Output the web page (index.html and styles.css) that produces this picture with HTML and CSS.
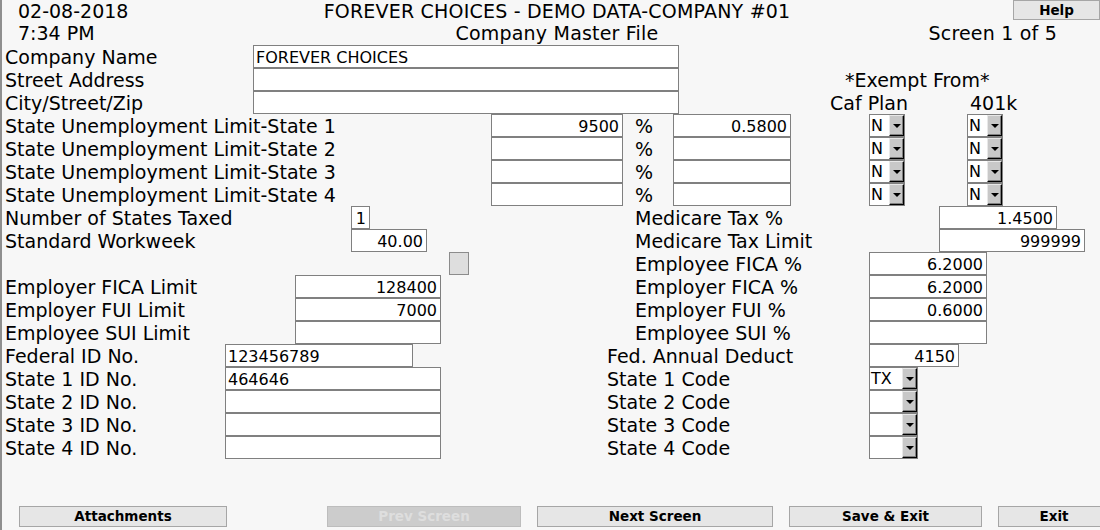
FILE: index.html
```html
<!DOCTYPE html>
<html>
<head>
<meta charset="utf-8">
<title>Company Master File</title>
<link rel="stylesheet" href="styles.css">
</head>
<body>
<div class="screen">
  <div class="form">
    <div class="hdr date r1">02-08-2018</div>
    <div class="hdr title r1">FOREVER CHOICES - DEMO DATA-COMPANY #01</div>
    <button class="btn help r1">Help</button>
    <div class="hdr date r2">7:34 PM</div>
    <div class="hdr title r2">Company Master File</div>
    <div class="hdr screen-no r2">Screen 1 of 5</div>

    <div class="lbl r3">Company Name</div>
    <input class="f co r3" value="FOREVER CHOICES">
    <div class="lbl r4">Street Address</div>
    <input class="f co r4" value="">
    <div class="lbl r5">City/Street/Zip</div>
    <input class="f co r5" value="">

    <div class="txt exempt r4">*Exempt From*</div>
    <div class="txt caf r5">Caf Plan</div>
    <div class="txt k401 r5">401k</div>

    <div class="lbl r6">State Unemployment Limit-State 1</div>
    <input class="f num sul r6" value="9500">
    <div class="txt pct r6">%</div>
    <input class="f num sul2 r6" value="0.5800">
    <div class="dd dd-caf r6"><span class="dd-val">N</span><span class="dd-btn"></span></div>
    <div class="dd dd-401 r6"><span class="dd-val">N</span><span class="dd-btn"></span></div>

    <div class="lbl r7">State Unemployment Limit-State 2</div>
    <input class="f num sul r7" value="">
    <div class="txt pct r7">%</div>
    <input class="f num sul2 r7" value="">
    <div class="dd dd-caf r7"><span class="dd-val">N</span><span class="dd-btn"></span></div>
    <div class="dd dd-401 r7"><span class="dd-val">N</span><span class="dd-btn"></span></div>

    <div class="lbl r8">State Unemployment Limit-State 3</div>
    <input class="f num sul r8" value="">
    <div class="txt pct r8">%</div>
    <input class="f num sul2 r8" value="">
    <div class="dd dd-caf r8"><span class="dd-val">N</span><span class="dd-btn"></span></div>
    <div class="dd dd-401 r8"><span class="dd-val">N</span><span class="dd-btn"></span></div>

    <div class="lbl r9">State Unemployment Limit-State 4</div>
    <input class="f num sul r9" value="">
    <div class="txt pct r9">%</div>
    <input class="f num sul2 r9" value="">
    <div class="dd dd-caf r9"><span class="dd-val">N</span><span class="dd-btn"></span></div>
    <div class="dd dd-401 r9"><span class="dd-val">N</span><span class="dd-btn"></span></div>

    <div class="lbl r10">Number of States Taxed</div>
    <input class="f num nstates r10" value="1">
    <div class="txt rlbl-pct r10">Medicare Tax %</div>
    <input class="f num medpct r10" value="1.4500">

    <div class="lbl r11">Standard Workweek</div>
    <input class="f num workweek r11" value="40.00">
    <div class="txt rlbl-pct r11">Medicare Tax Limit</div>
    <input class="f num medlim r11" value="999999">

    <button class="sqbtn r12" aria-label="Options"></button>
    <div class="txt rlbl-pct r12">Employee FICA %</div>
    <input class="f num rate r12" value="6.2000">

    <div class="lbl r13">Employer FICA Limit</div>
    <input class="f num limit r13" value="128400">
    <div class="txt rlbl-pct r13">Employer FICA %</div>
    <input class="f num rate r13" value="6.2000">

    <div class="lbl r14">Employer FUI Limit</div>
    <input class="f num limit r14" value="7000">
    <div class="txt rlbl-pct r14">Employer FUI %</div>
    <input class="f num rate r14" value="0.6000">

    <div class="lbl r15">Employee SUI Limit</div>
    <input class="f num limit r15" value="">
    <div class="txt rlbl-pct r15">Employee SUI %</div>
    <input class="f num rate r15" value="">

    <div class="lbl r16">Federal ID No.</div>
    <input class="f fedid r16" value="123456789">
    <div class="txt rlbl r16">Fed. Annual Deduct</div>
    <input class="f num fedded r16" value="4150">

    <div class="lbl r17">State 1 ID No.</div>
    <input class="f stid r17" value="464646">
    <div class="txt rlbl r17">State 1 Code</div>
    <div class="dd dd-st r17"><span class="dd-val">TX</span><span class="dd-btn"></span></div>

    <div class="lbl r18">State 2 ID No.</div>
    <input class="f stid r18" value="">
    <div class="txt rlbl r18">State 2 Code</div>
    <div class="dd dd-st r18"><span class="dd-val"></span><span class="dd-btn"></span></div>

    <div class="lbl r19">State 3 ID No.</div>
    <input class="f stid r19" value="">
    <div class="txt rlbl r19">State 3 Code</div>
    <div class="dd dd-st r19"><span class="dd-val"></span><span class="dd-btn"></span></div>

    <div class="lbl r20">State 4 ID No.</div>
    <input class="f stid r20" value="">
    <div class="txt rlbl r20">State 4 Code</div>
    <div class="dd dd-st r20"><span class="dd-val"></span><span class="dd-btn"></span></div>
  </div>

  <div class="footer">
    <button class="btn fbtn b-attach">Attachments</button>
    <button class="btn fbtn b-prev" disabled>Prev Screen</button>
    <button class="btn fbtn b-next">Next Screen</button>
    <button class="btn fbtn b-save">Save &amp; Exit</button>
    <button class="btn fbtn b-exit">Exit</button>
  </div>
</div>
</body>
</html>
```

FILE: styles.css
```css
html, body {
  margin: 0;
  padding: 0;
  width: 1100px;
  height: 530px;
  overflow: hidden;
  background: #f7f7f7;
}

body {
  font-family: "DejaVu Sans", Verdana, sans-serif;
  color: #000;
}

.screen {
  height: 530px;
  border-left: 2px solid #8f8f8f;
  box-sizing: border-box;
}

.form {
  display: grid;
  grid-template-columns:
    [x0] 3px [lbl] 220px [id] 28px [co] 42px [lim] 56px [ns] 19px [nse] 43px
    [fide] 14px [wwe] 14px [ide] 8px [sb] 20px [sbe] 22px [sul] 116px [rl] 16px
    [sule] 12px [pct] 38px [sul2] 6px [coe] 112px [sul2e] 78px [dd1] 70px [med] 20px
    [fade] 8px [dd2] 20px [efe] 70px [mede] 28px [mle] 15px [end];
  grid-template-rows: 22px repeat(19, 23px);
  font-size: 19px;
}

.r1 { grid-row: 1; }
.r2 { grid-row: 2; }
.r3 { grid-row: 3; }
.r4 { grid-row: 4; }
.r5 { grid-row: 5; }
.r6 { grid-row: 6; }
.r7 { grid-row: 7; }
.r8 { grid-row: 8; }
.r9 { grid-row: 9; }
.r10 { grid-row: 10; }
.r11 { grid-row: 11; }
.r12 { grid-row: 12; }
.r13 { grid-row: 13; }
.r14 { grid-row: 14; }
.r15 { grid-row: 15; }
.r16 { grid-row: 16; }
.r17 { grid-row: 17; }
.r18 { grid-row: 18; }
.r19 { grid-row: 19; }
.r20 { grid-row: 20; }

.hdr, .lbl, .txt {
  white-space: nowrap;
  line-height: 23px;
  align-self: start;
}

.lbl, .txt {
  padding-top: 1px;
}

.hdr.date {
  grid-column: lbl / co;
  padding-left: 13px;
}

.hdr.title {
  grid-column: x0 / end;
  text-align: center;
  padding-left: 12px;
  letter-spacing: 0.2px;
}

.hdr.screen-no {
  grid-column: sul2e / end;
  justify-self: end;
  margin-right: 43px;
  letter-spacing: 0.2px;
}

.lbl {
  grid-column: lbl / id;
}

.txt.pct { grid-column: pct / sul2; }
.txt.rlbl-pct { grid-column: pct / sul2e; }
.txt.rlbl { grid-column: rl / sul2e; }
.txt.exempt { grid-column: sul2e / end; padding-left: 54px; }
.txt.caf { grid-column: sul2e / dd2; padding-left: 39px; }
.txt.k401 { grid-column: dd2 / end; padding-left: 3px; }

/* text fields */
.f {
  display: block;
  width: 100%;
  height: 23px;
  margin: 0;
  box-sizing: border-box;
  border: 1px solid #808080;
  background: #fff;
  padding: 1px 3px 0 2px;
  font-family: "DejaVu Sans", Verdana, sans-serif;
  font-size: 16px;
  color: #000;
  outline: none;
  border-radius: 0;
}

.f.num { text-align: right; padding-right: 3px; }

.co { grid-column: co / coe; }
.sul { grid-column: sul / sule; }
.sul2 { grid-column: sul2 / sul2e; }
.nstates { grid-column: ns / nse; }
.workweek { grid-column: ns / wwe; }
.limit { grid-column: lim / ide; }
.fedid { grid-column: id / fide; }
.stid { grid-column: id / ide; }
.medpct { grid-column: med / mede; }
.medlim { grid-column: med / mle; }
.rate { grid-column: dd1 / efe; }
.fedded { grid-column: dd1 / fade; }

/* dropdowns */
.dd {
  display: flex;
  height: 23px;
  box-sizing: border-box;
  border: 1px solid #808080;
  justify-self: start;
}

.dd-caf { grid-column: dd1 / end; width: 36px; }
.dd-401 { grid-column: dd2 / end; width: 36px; }
.dd-st { grid-column: dd1 / end; width: 49px; }

.dd-val {
  flex: 1;
  background: #fff;
  font-size: 16px;
  line-height: 22px;
  padding-left: 1px;
}

.dd-btn {
  width: 15px;
  box-sizing: border-box;
  background: #c8c8c8;
  border-top: 1px solid #e8e8e8;
  border-left: 1px solid #e8e8e8;
  border-right: 1px solid #000;
  border-bottom: 1px solid #000;
  box-shadow: inset -1px -1px 0 #808080;
  display: flex;
  align-items: center;
  justify-content: center;
}

.dd-btn::after {
  content: "";
  width: 0;
  height: 0;
  border-left: 4px solid transparent;
  border-right: 4px solid transparent;
  border-top: 4px solid #000;
}

/* small square button */
.sqbtn {
  grid-column: sb / sbe;
  width: 20px;
  height: 23px;
  margin: 0;
  padding: 0;
  box-sizing: border-box;
  background: #dedede;
  border: 1px solid #8c8c8c;
}

/* push buttons */
.btn {
  margin: 0;
  padding: 0;
  box-sizing: border-box;
  background: #e6e6e6;
  border: 1px solid #a6a6a6;
  font-family: "DejaVu Sans", Verdana, sans-serif;
  font-weight: bold;
  font-size: 13.5px;
  color: #000;
  border-radius: 0;
}

.help {
  grid-column: x0 / end;
  justify-self: end;
  align-self: start;
  width: 87px;
  height: 20px;
}

.footer {
  display: flex;
  margin-top: 47px;
  padding-left: 17px;
}

.fbtn { height: 21px; flex: none; line-height: 19px; }
.b-attach { width: 208px; margin-right: 100px; }
.b-prev {
  width: 194px;
  margin-right: 16px;
  background: #cccccc;
  border-color: #bdbdbd;
  color: #dedede;
}
.b-next { width: 236px; margin-right: 16px; }
.b-save { width: 193px; margin-right: 16px; }
.b-exit { width: 112px; }
```
